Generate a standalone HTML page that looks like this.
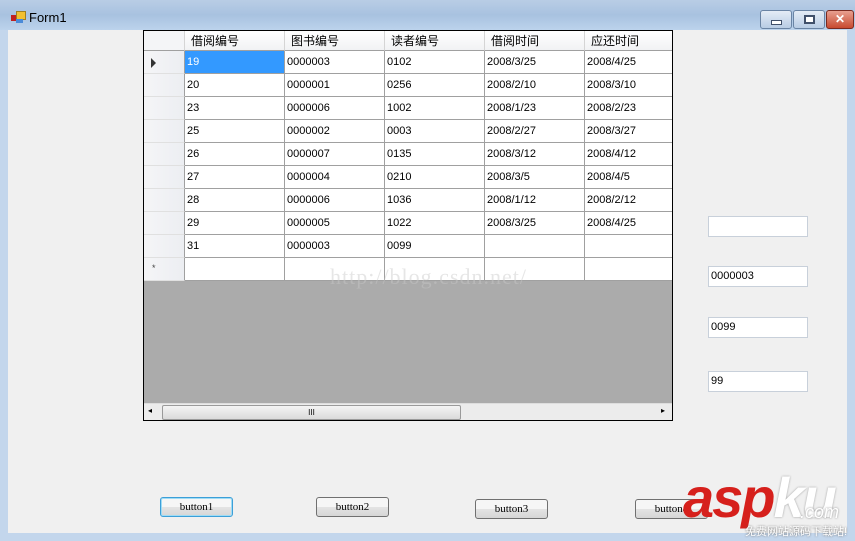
<!DOCTYPE html>
<html><head><style>
body{margin:0;width:855px;height:541px;overflow:hidden;background:#c3d6ec;font-family:"Liberation Sans","Noto Sans CJK SC",sans-serif;position:relative}
.tb{position:absolute;left:0;top:0;width:855px;height:30px;background:linear-gradient(#b9cde5,#a8c2e0 50%,#bcd3ec)}
.client{position:absolute;left:8px;top:30px;width:839px;height:503px;background:#f0f0f0}
.a{position:absolute}
.grid{position:absolute;left:143px;top:30px;width:528px;height:389px;border:1px solid #000;background:#ababab;overflow:hidden}
.c{position:absolute;border-right:1px solid #a0a0a0;border-bottom:1px solid #a0a0a0;background:#fff;font-size:11px;line-height:23px;padding-left:2px;box-sizing:border-box;height:23px}
.h{position:absolute;top:0;height:20px;font-size:12px;line-height:20px;padding-left:6px;box-sizing:border-box;background:linear-gradient(#fff,#f1f2f4);border-right:1px solid #d5d5d5;border-bottom:1px solid #a0a0a0;font-family:"Noto Sans CJK SC",sans-serif}
.rh{position:absolute;left:0;width:41px;height:23px;box-sizing:border-box;background:linear-gradient(90deg,#f5f5f7,#eceef2);border-right:1px solid #a0a0a0;border-bottom:1px solid #e0e0e0}
.tx{position:absolute;left:708px;width:100px;height:21px;background:#fff;border:1px solid #c8d0da;box-sizing:border-box;font-size:11px;line-height:19px;padding-left:2px}
.btn{position:absolute;width:73px;height:20px;box-sizing:border-box;border:1px solid #707070;border-radius:3px;background:linear-gradient(#f6f6f6 50%,#e4e4e4 50%,#d6d6d6);font-family:"Liberation Serif",serif;font-size:11px;text-align:center;line-height:18px}
</style></head><body>
<div class="tb"></div>
<div class="a" style="left:11px;top:15px;width:6px;height:6px;background:#c02020"></div>
<div class="a" style="left:16px;top:11px;width:8px;height:7px;background:#f2c030;border:1px solid #a08020"></div>
<div class="a" style="left:16px;top:19px;width:7px;height:4px;background:#4a8ad8"></div>
<div class="a" style="left:29px;top:10px;font-size:13px">Form1</div>
<div class="a" style="left:760px;top:10px;width:30px;height:17px;border:1px solid #6a84a4;border-radius:3px;background:linear-gradient(#e4ecf6,#b8cce4)"><div class="a" style="left:10px;top:9px;width:9px;height:3px;background:#fff;border:1px solid #40506a"></div></div>
<div class="a" style="left:793px;top:10px;width:30px;height:17px;border:1px solid #6a84a4;border-radius:3px;background:linear-gradient(#e4ecf6,#b8cce4)"><div class="a" style="left:10px;top:4px;width:7px;height:5px;border:2px solid #40506a;background:#fff"></div></div>
<div class="a" style="left:826px;top:10px;width:26px;height:17px;border:1px solid #7a2a20;border-radius:3px;background:linear-gradient(#e8a090,#c84a30);color:#fff;font-weight:bold;font-size:12px;text-align:center;line-height:17px">✕</div>
<div class="client"></div>
<div class="grid">
<div class="h" style="left:0;width:41px;background:#f4f5f7"></div>
<div class="h" style="left:41px;width:100px">借阅编号</div>
<div class="h" style="left:141px;width:100px">图书编号</div>
<div class="h" style="left:241px;width:100px">读者编号</div>
<div class="h" style="left:341px;width:100px">借阅时间</div>
<div class="h" style="left:441px;width:100px">应还时间</div>
<div id="rows"></div>
<div class="a" style="left:0;top:372px;width:528px;height:17px;background:#ececec;border-top:1px solid #ddd"></div>
<div class="a" style="left:18px;top:374px;width:297px;height:13px;border:1px solid #9a9a9a;border-radius:2px;background:linear-gradient(#f4f4f4,#dadada);font-size:8px;text-align:center;line-height:13px">III</div>
<div class="a" style="left:4px;top:375px;font-size:8px">◂</div>
<div class="a" style="left:517px;top:375px;font-size:8px">▸</div>
<div class="a" style="left:186px;top:233px;font-family:'Liberation Serif',serif;font-size:22px;color:rgba(200,200,200,0.45);letter-spacing:1px">http://blog.csdn.net/</div>
</div>
<div class="tx" style="top:216px"></div>
<div class="tx" style="top:266px">0000003</div>
<div class="tx" style="top:317px">0099</div>
<div class="tx" style="top:371px">99</div>
<div class="btn" style="left:160px;top:497px;border-color:#3c9fd8;box-shadow:inset 0 0 0 1px #9fdcf5">button1</div>
<div class="btn" style="left:316px;top:497px">button2</div>
<div class="btn" style="left:475px;top:499px">button3</div>
<div class="btn" style="left:635px;top:499px">button4</div>
<div class="a" style="left:683px;top:468px;font-family:'Liberation Sans',sans-serif;font-weight:bold;font-style:italic;font-size:56px;color:#d6201c;letter-spacing:-2px;line-height:60px">asp<span style="color:#fff;text-shadow:0 0 2px #999">ku</span></div>
<div class="a" style="left:800px;top:502px;font-style:italic;font-size:18px;color:#fff;text-shadow:0 0 2px #888">.com</div>
<div class="a" style="left:745px;top:523px;font-size:11px;color:#fff;text-shadow:0 0 2px #666">免费网站源码下载站!</div>
<script>
var d=[["19","0000003","0102","2008/3/25","2008/4/25"],["20","0000001","0256","2008/2/10","2008/3/10"],["23","0000006","1002","2008/1/23","2008/2/23"],["25","0000002","0003","2008/2/27","2008/3/27"],["26","0000007","0135","2008/3/12","2008/4/12"],["27","0000004","0210","2008/3/5","2008/4/5"],["28","0000006","1036","2008/1/12","2008/2/12"],["29","0000005","1022","2008/3/25","2008/4/25"],["31","0000003","0099","",""],["","","","",""]];
var h="";
d.forEach(function(r,i){var t=20+i*23;
h+='<div class="rh" style="top:'+t+'px">'+(i==0?'<div class="a" style="left:7px;top:7px;width:0;height:0;border-left:5px solid #333;border-top:5px solid transparent;border-bottom:5px solid transparent"></div>':'')+(i==9?'<div class="a" style="left:8px;top:5px;font-size:9px;color:#444">*</div>':'')+'</div>';
r.forEach(function(v,j){var bg=(i==0&&j==0)?'background:#3399ff;color:#fff;':'';
h+='<div class="c" style="'+bg+'left:'+(41+j*100)+'px;top:'+t+'px;width:100px">'+v+'</div>';});});
document.getElementById("rows").innerHTML=h;
</script>
</body></html>
